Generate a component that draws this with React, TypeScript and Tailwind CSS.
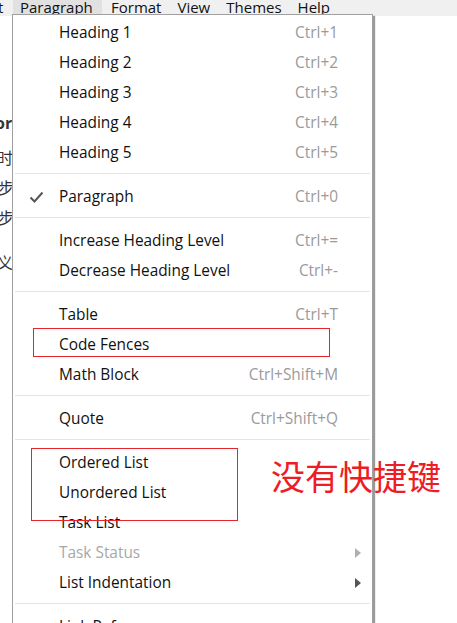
import React from "react";

type Item =
  | { type: "sep" }
  | { type: "item"; label: string; shortcut?: string; checked?: boolean; disabled?: boolean; submenu?: boolean };

const items: Item[] = [
  { type: "item", label: "Heading 1", shortcut: "Ctrl+1" },
  { type: "item", label: "Heading 2", shortcut: "Ctrl+2" },
  { type: "item", label: "Heading 3", shortcut: "Ctrl+3" },
  { type: "item", label: "Heading 4", shortcut: "Ctrl+4" },
  { type: "item", label: "Heading 5", shortcut: "Ctrl+5" },
  { type: "sep" },
  { type: "item", label: "Paragraph", shortcut: "Ctrl+0", checked: true },
  { type: "sep" },
  { type: "item", label: "Increase Heading Level", shortcut: "Ctrl+=" },
  { type: "item", label: "Decrease Heading Level", shortcut: "Ctrl+-" },
  { type: "sep" },
  { type: "item", label: "Table", shortcut: "Ctrl+T" },
  { type: "item", label: "Code Fences" },
  { type: "item", label: "Math Block", shortcut: "Ctrl+Shift+M" },
  { type: "sep" },
  { type: "item", label: "Quote", shortcut: "Ctrl+Shift+Q" },
  { type: "sep" },
  { type: "item", label: "Ordered List" },
  { type: "item", label: "Unordered List" },
  { type: "item", label: "Task List" },
  { type: "item", label: "Task Status", disabled: true, submenu: true },
  { type: "item", label: "List Indentation", submenu: true },
  { type: "sep" },
  { type: "item", label: "Link Reference" },
];

const font = { fontFamily: '"Open Sans", "Noto Sans", sans-serif' };

export default function App() {
  return (
    <div className="relative w-[457px] h-[623px] overflow-hidden bg-white text-[#1a1a1a]" style={font}>
      {/* Menu bar */}
      <div className="flex h-[16px] items-start bg-[#f0f0f0] text-[15px] leading-[14px] text-[#111]">
        <div className="w-[13px] overflow-hidden">
          <span className="block -ml-[2px]">t</span>
        </div>
        <div className="flex h-[15px] w-[89px] items-start bg-[#e1e1e1] pl-[7px]">Paragraph</div>
        <div className="flex gap-[16px] pl-[9px]">
          <span>Format</span>
          <span>View</span>
          <span>Themes</span>
          <span>Help</span>
        </div>
      </div>

      {/* Page content behind the menu */}
      <div className="w-[12px] overflow-hidden pt-[97px] text-[16px] text-[#333]">
        <div className="h-[20px] -ml-[5px] font-bold leading-[20px]">or</div>
        <div className="mt-[14px] flex flex-col gap-[10px] leading-[20px]" style={{ fontFamily: '"Noto Sans CJK SC", sans-serif' }}>
          <span className="-ml-[3px]">时</span>
          <span className="-ml-[2px]">步</span>
          <span className="-ml-[2px]">步</span>
          <span className="mt-[15px] -ml-[3px]">义</span>
        </div>
      </div>

      {/* Dropdown menu */}
      <div className="absolute left-[12px] top-[14px] w-[361px] h-[640px] border border-[#a0a0a0] bg-white pt-[3px] shadow-[2px_2px_1px_#9a9a9a]">
        {items.map((it, i) =>
          it.type === "sep" ? (
            <div key={i} className="mx-[2px] mt-[5px] mb-[8px] h-px bg-[#e4e4e4]" />
          ) : (
            <div key={i} className="relative flex h-[30px] items-center pl-[46px] pr-[34px] text-[15.4px]">
              {it.checked && (
                <svg className="absolute left-[16px] top-[9px]" width="15" height="12" viewBox="0 0 15 12">
                  <path d="M1.5 6.5 L5.5 10.5 L13.5 1.5" fill="none" stroke="#555" strokeWidth="2" />
                </svg>
              )}
              <span className={it.disabled ? "text-[#a8a8a8]" : "text-[#111]"}>{it.label}</span>
              <span className="ml-auto text-[#9a9a9a]">{it.shortcut}</span>
              {it.submenu && (
                <svg className="absolute right-[11px] top-[10px]" width="6" height="10" viewBox="0 0 6 10">
                  <path d="M0 0 L6 5 L0 10 Z" fill={it.disabled ? "#b0b0b0" : "#555"} />
                </svg>
              )}
            </div>
          )
        )}
      </div>

      {/* Red annotations */}
      <div className="absolute left-[33px] top-[328px] w-[297px] h-[29px] border border-[#e8232b]" />
      <div className="absolute left-[31px] top-[448px] w-[207px] h-[73px] border border-[#e8232b]" />
      <div
        className="absolute left-[271px] top-[454px] text-[34px] leading-[44px] text-[#ee1c25]"
        style={{ fontFamily: '"Noto Sans CJK SC", sans-serif' }}
      >
        没有快捷键
      </div>
    </div>
  );
}
